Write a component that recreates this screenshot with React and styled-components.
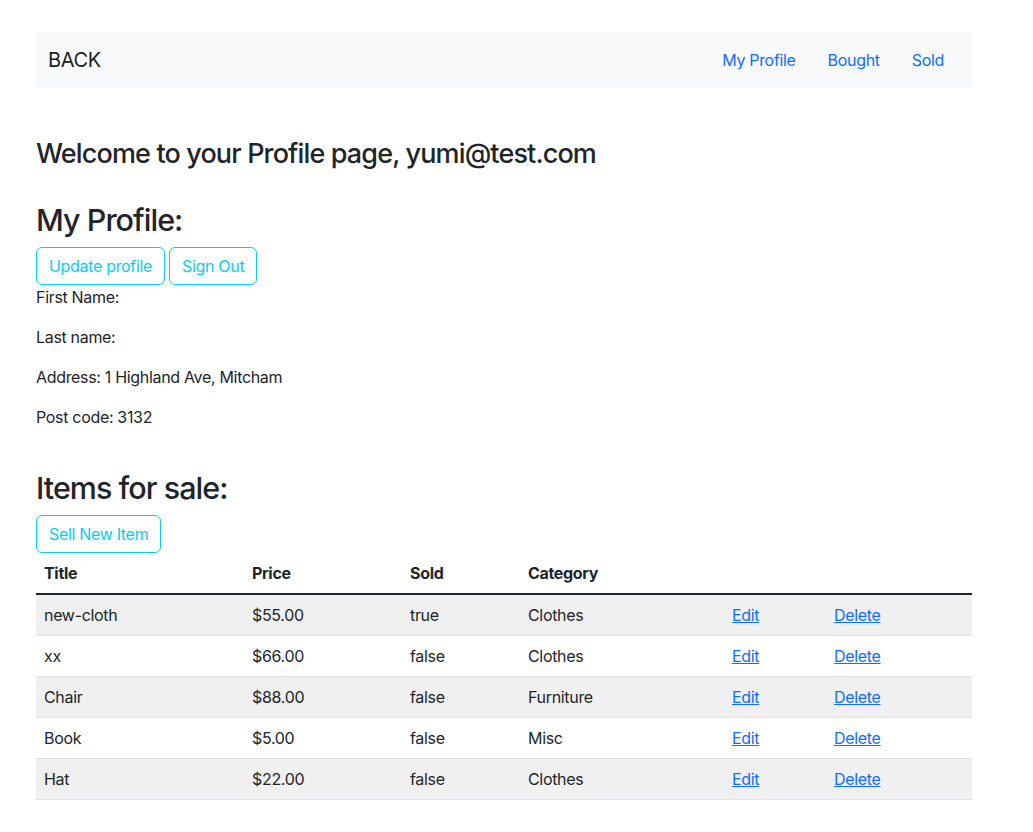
import styled, { createGlobalStyle } from "styled-components";

const GlobalStyle = createGlobalStyle`
  body {
    margin: 0;
    font-family: Inter, "Noto Sans", "Liberation Sans", sans-serif;
    font-size: 16px;
    line-height: 1.5;
    letter-spacing: -0.02em;
    color: #212529;
    background: #fff;
  }
  * { box-sizing: border-box; }
`;

const items = [
  { title: "new-cloth", price: "$55.00", sold: "true", category: "Clothes" },
  { title: "xx", price: "$66.00", sold: "false", category: "Clothes" },
  { title: "Chair", price: "$88.00", sold: "false", category: "Furniture" },
  { title: "Book", price: "$5.00", sold: "false", category: "Misc" },
  { title: "Hat", price: "$22.00", sold: "false", category: "Clothes" },
];

const columns = [
  { label: "Title", width: 208 },
  { label: "Price", width: 158 },
  { label: "Sold", width: 118 },
  { label: "Category", width: 204 },
  { label: "", width: 102 },
  { label: "", width: 146 },
];

const App = () => {
  return (
    <>
      <GlobalStyle />
      <Page>
        <NavBar>
          <Brand href="#">BACK</Brand>
          <NavLinks>
            <NavLink href="#">My Profile</NavLink>
            <NavLink href="#">Bought</NavLink>
            <NavLink href="#">Sold</NavLink>
          </NavLinks>
        </NavBar>

        <Welcome>Welcome to your Profile page, yumi@test.com</Welcome>

        <SectionTitle>My Profile:</SectionTitle>
        <ButtonRow>
          <OutlineButton>Update profile</OutlineButton>
          <OutlineButton>Sign Out</OutlineButton>
        </ButtonRow>
        <Info>First Name: </Info>
        <Info>Last name: </Info>
        <Info>Address: 1 Highland Ave, Mitcham</Info>
        <Info>Post code: 3132</Info>

        <SectionTitle $spaced>Items for sale:</SectionTitle>
        <ButtonRow>
          <OutlineButton>Sell New Item</OutlineButton>
        </ButtonRow>

        <Table>
          <thead>
            <tr>
              {columns.map((c, i) => (
                <Th key={i} $width={c.width}>
                  {c.label}
                </Th>
              ))}
            </tr>
          </thead>
          <tbody>
            {items.map((item, i) => (
              <Row key={item.title} $striped={i % 2 === 0}>
                <Td>{item.title}</Td>
                <Td>{item.price}</Td>
                <Td>{item.sold}</Td>
                <Td>{item.category}</Td>
                <Td>
                  <TableLink href="#">Edit</TableLink>
                </Td>
                <Td>
                  <TableLink href="#">Delete</TableLink>
                </Td>
              </Row>
            ))}
          </tbody>
        </Table>
      </Page>
    </>
  );
};

export default App;

const Page = styled.div`
  width: 936px;
  margin: 32px 0 0 36px;
  padding-bottom: 32px;
`;

const NavBar = styled.nav`
  display: flex;
  align-items: center;
  justify-content: space-between;
  height: 56px;
  background: #f8f9fa;
  padding: 0 28px 0 12px;
`;

const Brand = styled.a`
  font-size: 20px;
  color: rgba(0, 0, 0, 0.9);
  text-decoration: none;
`;

const NavLinks = styled.div`
  display: flex;
  gap: 32px;
`;

const NavLink = styled.a`
  color: #0d6efd;
  text-decoration: none;
  font-size: 16px;
`;

const Welcome = styled.h3`
  font-size: 27px;
  font-weight: 500;
  line-height: 1.2;
  letter-spacing: -0.032em;
  margin: 50px 0 32px;
`;

const SectionTitle = styled.h2`
  font-size: 30.5px;
  font-weight: 500;
  line-height: 1.2;
  letter-spacing: -0.032em;
  margin: ${(p) => (p.$spaced ? "41px" : "0")} 0 8px;
`;

const ButtonRow = styled.div`
  display: flex;
  gap: 4px;
`;

const OutlineButton = styled.button`
  font-family: inherit;
  font-size: 16px;
  line-height: 1.5;
  letter-spacing: inherit;
  padding: 6px 12px;
  color: #0dcaf0;
  background: transparent;
  border: 1px solid #0dcaf0;
  border-radius: 6px;
  cursor: pointer;
`;

const Info = styled.p`
  margin: 0 0 16px;
`;

const Table = styled.table`
  width: 100%;
  border-collapse: collapse;
  table-layout: fixed;
`;

const Th = styled.th`
  width: ${(p) => p.$width}px;
  text-align: left;
  font-weight: 700;
  padding: 8px;
  border-bottom: 2px solid #212529;
`;

const Row = styled.tr`
  background: ${(p) => (p.$striped ? "#f0f0f0" : "#fff")};
  border-bottom: 1px solid #dee2e6;
`;

const Td = styled.td`
  padding: 8px;
`;

const TableLink = styled.a`
  color: #0d6efd;
  text-decoration: underline;
`;
